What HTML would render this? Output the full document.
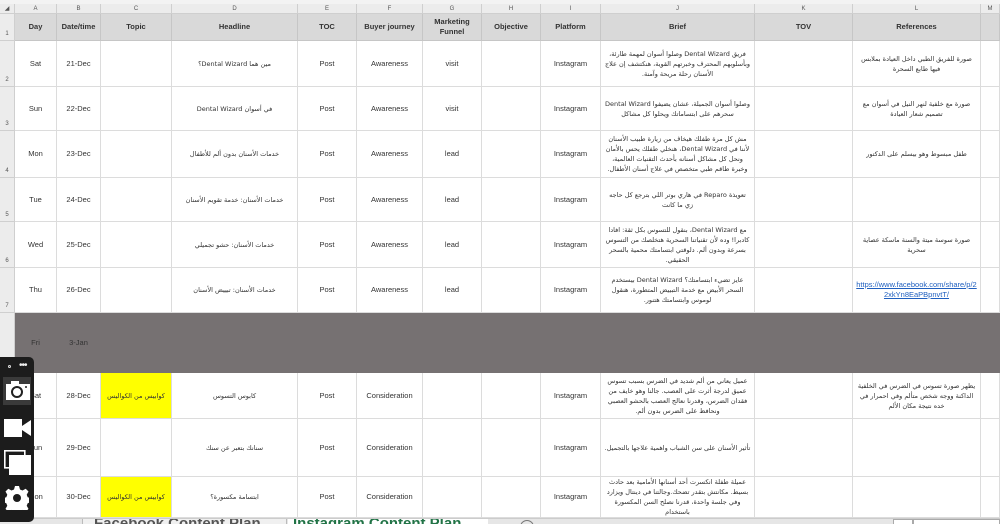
<!DOCTYPE html>
<html><head><meta charset="utf-8"><style>
*{margin:0;padding:0;box-sizing:border-box}
body{width:1000px;height:524px;overflow:hidden;background:#fff;position:relative;font-family:"Liberation Sans","DejaVu Sans",sans-serif;font-size:7.5px;color:#333}
.c{position:absolute;display:flex;align-items:center;justify-content:center;text-align:center;line-height:10px;border-right:1px solid #dcdcdc;border-bottom:1px solid #dcdcdc;padding:0 3px;overflow:hidden}
.ar{direction:rtl;font-family:"DejaVu Sans",sans-serif;font-size:6.5px;line-height:10px}
.h{background:#d9d9d9;font-weight:bold;color:#333;border-color:#c6c6c6;font-size:7.5px}
.ch{background:#ececec;color:#555;font-size:6px;border-color:#cfcfcf}
.rh{background:#ececec;color:#555;font-size:6px;border-color:#cfcfcf;align-items:flex-end;padding-bottom:1px}
.y{background:#ffff00}
.g{background:#767172;color:#333;border-color:#767172}
a{word-break:break-all;display:block;width:100%}
</style></head><body>
<div style="position:absolute;left:0;top:0;width:1000px;height:4px;background:#f3f3f3"></div>
<div id="g"></div>
<script>
var X=[15,57,101,172,298,357,423,482,541,601,755,853,981,1000];
var L="ABCDEFGHIJKLM";
var Y=[14,41,87,131,178,222,268,313,373,419,477,518];
var h='';
function cell(x0,x1,y0,y1,cls,t){h+='<div class="c '+cls+'" style="left:'+x0+'px;top:'+y0+'px;width:'+(x1-x0)+'px;height:'+(y1-y0)+'px">'+t+'</div>';}
cell(0,15,4,14,'ch','◢');
for(var i=0;i<13;i++)cell(X[i],X[i+1],4,14,'ch',L[i]);
var rn=['1','2','3','4','5','6','7','','','',''];
for(var r=0;r<11;r++)cell(0,15,Y[r],Y[r+1],'rh',rn[r]);
var H=['Day','Date/time','Topic','Headline','TOC','Buyer journey','Marketing Funnel','Objective','Platform','Brief','TOV','References',''];
for(i=0;i<13;i++)cell(X[i],X[i+1],Y[0],Y[1],'h',H[i]);
var R=[
['Sat','21-Dec','','مين هما Dental Wizard؟','Post','Awareness','visit','','Instagram','فريق Dental Wizard وصلوا أسوان لمهمة طارئة، وبأسلوبهم المحترف وخبرتهم القوية، هنكتشف إن علاج الأسنان رحلة مريحة وآمنة.','','صورة للفريق الطبي داخل العيادة بملابس فيها طابع السحرة'],
['Sun','22-Dec','','في أسوان Dental Wizard','Post','Awareness','visit','','Instagram','وصلوا أسوان الجميلة، عشان يضيفوا Dental Wizard سحرهم على ابتساماتك ويحلوا كل مشاكل','','صورة مع خلفية لنهر النيل في أسوان مع تصميم شعار العيادة'],
['Mon','23-Dec','','خدمات الأسنان بدون ألم للأطفال','Post','Awareness','lead','','Instagram','مش كل مرة طفلك هيخاف من زيارة طبيب الأسنان لأننا في Dental Wizard، هنخلي طفلك يحس بالأمان ونحل كل مشاكل أسنانه بأحدث التقنيات العالمية، وخبرة طاقم طبي متخصص في علاج أسنان الأطفال.','','طفل مبسوط وهو بيسلم على الدكتور'],
['Tue','24-Dec','','خدمات الأسنان: خدمة تقويم الأسنان','Post','Awareness','lead','','Instagram','تعويذة Reparo في هاري بوتر اللي بترجع كل حاجه زي ما كانت','',''],
['Wed','25-Dec','','خدمات الأسنان: حشو تجميلي','Post','Awareness','lead','','Instagram','مع Dental Wizard، بنقول للتسوس بكل ثقة: افادا كادبرا! وده لأن تقنياتنا السحرية هتخلصك من التسوس بسرعة وبدون ألم. دلوقتي ابتسامتك محمية بالسحر الحقيقي.','','صورة سوسة ميتة والسنة ماسكة عصاية سحرية'],
['Thu','26-Dec','','خدمات الأسنان: تبييض الأسنان','Post','Awareness','lead','','Instagram','عايز تضيء ابتسامتك؟ Dental Wizard بيستخدم السحر الأبيض مع خدمة التبييض المتطورة، هنقول لوموس وابتسامتك هتنور.','','<a style="color:#1f5fbf;text-decoration:underline;font-family:Liberation Sans,sans-serif">https://www.facebook.com/share/p/22xkYn8EaPBpnvtT/</a>'],
['Fri','3-Jan','','','','','','','','','',''],
['Sat','28-Dec','كوابيس من الكواليس','كابوس التسوس','Post','Consideration','','','Instagram','عميل يعاني من ألم شديد في الضرس بسبب تسوس عميق لدرجة أثرت على العصب. جالنا وهو خايف من فقدان الضرس، وقدرنا نعالج العصب بالحشو العصبي ونحافظ على الضرس بدون ألم.','','يظهر صورة تسوس في الضرس في الخلفية الداكنة ووجه شخص متألم وفي احمرار في خده نتيجة مكان الألم'],
['Sun','29-Dec','','سنانك بتعبر عن سنك','Post','Consideration','','','Instagram','تأثير الأسنان على سن الشباب واهمية علاجها بالتجميل.','',''],
['Mon','30-Dec','كوابيس من الكواليس','ابتسامة مكسورة؟','Post','Consideration','','','Instagram','عميلة طفلة انكسرت أحد أسنانها الأمامية بعد حادث بسيط. مكانتش بتقدر تضحك.وجالتنا في دينتال ويزارد وفي جلسة واحدة، قدرنا نصلح السن المكسورة باستخدام','','']
];
for(r=0;r<10;r++){var row=R[r];for(i=0;i<13;i++){var t=i<12?row[i]:'';var cls='';
if(r==6)cls='g';
if((i==2&&t)) cls='y ar';
else if(/[\u0600-\u06FF]/.test(t)) cls+=' ar';
cell(X[i],X[i+1],Y[r+1],Y[r+2],cls,t);}}
document.getElementById('g').outerHTML=h;
</script>
<div style="position:absolute;left:0;top:518px;width:1000px;height:6px;background:#e6e6e6;border-top:1px solid #ccc;overflow:hidden">
<div style="position:absolute;left:82px;top:0;width:205px;height:8px;background:#f0f0f0;border-left:1px solid #bbb;border-right:1px solid #bbb"></div>
<div style="position:absolute;left:94px;top:-3px;font:bold 15px 'Liberation Sans',sans-serif;color:#555;white-space:nowrap;line-height:15px">Facebook Content Plan</div>
<div style="position:absolute;left:288px;top:0;width:200px;height:8px;background:#fff"></div>
<div style="position:absolute;left:293px;top:-3px;font:bold 15px 'Liberation Sans',sans-serif;color:#217346;white-space:nowrap;line-height:15px">Instagram Content Plan</div>
<div style="position:absolute;left:520px;top:1px;width:14px;height:14px;border:1px solid #777;border-radius:50%"></div>
<div style="position:absolute;left:893px;top:0;width:20px;height:8px;background:#fff;border:1px solid #aaa"></div>
<div style="position:absolute;left:913px;top:0;width:87px;height:8px;background:#fff;border:1px solid #aaa"></div>
</div>
<div style="position:absolute;left:0;top:357px;width:34px;height:165px;background:#1c1c1c;border-radius:0 5px 5px 0">
<div style="position:absolute;left:8px;top:8px;width:3px;height:3px;border:1px solid #ddd;border-radius:50%"></div>
<div style="position:absolute;left:19px;top:6px;color:#eee;font-size:10px;line-height:6px;letter-spacing:-1px">•••</div>
<div style="position:absolute;left:3px;top:20px;width:28px;height:28px;background:#3a3a3a"></div>
<svg style="position:absolute;left:5px;top:24px" width="26" height="20" viewBox="0 0 26 20"><rect x="1" y="3" width="24" height="16" fill="#fff"/><rect x="6" y="0" width="8" height="4" fill="#fff"/><circle cx="12" cy="11" r="5" fill="none" stroke="#222" stroke-width="2"/><circle cx="21" cy="6" r="1" fill="#222"/></svg>
<svg style="position:absolute;left:4px;top:62px" width="27" height="18" viewBox="0 0 27 18"><rect x="0" y="0" width="18" height="18" fill="#fff"/><path d="M18 7 L27 1 V17 L18 11Z" fill="#fff"/></svg>
<svg style="position:absolute;left:4px;top:93px" width="27" height="25" viewBox="0 0 27 25"><rect x="0.8" y="0.8" width="20" height="17" fill="none" stroke="#fff" stroke-width="1.6"/><rect x="5" y="5" width="22" height="20" fill="#fff"/></svg>
<svg style="position:absolute;left:5px;top:129px" width="24" height="24" viewBox="0 0 24 24"><path fill="#fff" d="M10 0h4l1 3.5 2.5 1 3.2-1.8 2.8 2.8-1.8 3.2 1 2.5 3.3 1v4l-3.3 1-1 2.5 1.8 3.2-2.8 2.8-3.2-1.8-2.5 1-1 3.3h-4l-1-3.3-2.5-1-3.2 1.8-2.8-2.8 1.8-3.2-1-2.5-3.3-1v-4l3.3-1 1-2.5-1.8-3.2 2.8-2.8 3.2 1.8 2.5-1z"/><circle cx="12" cy="12" r="4" fill="#1c1c1c"/></svg>
</div>
</body></html>
